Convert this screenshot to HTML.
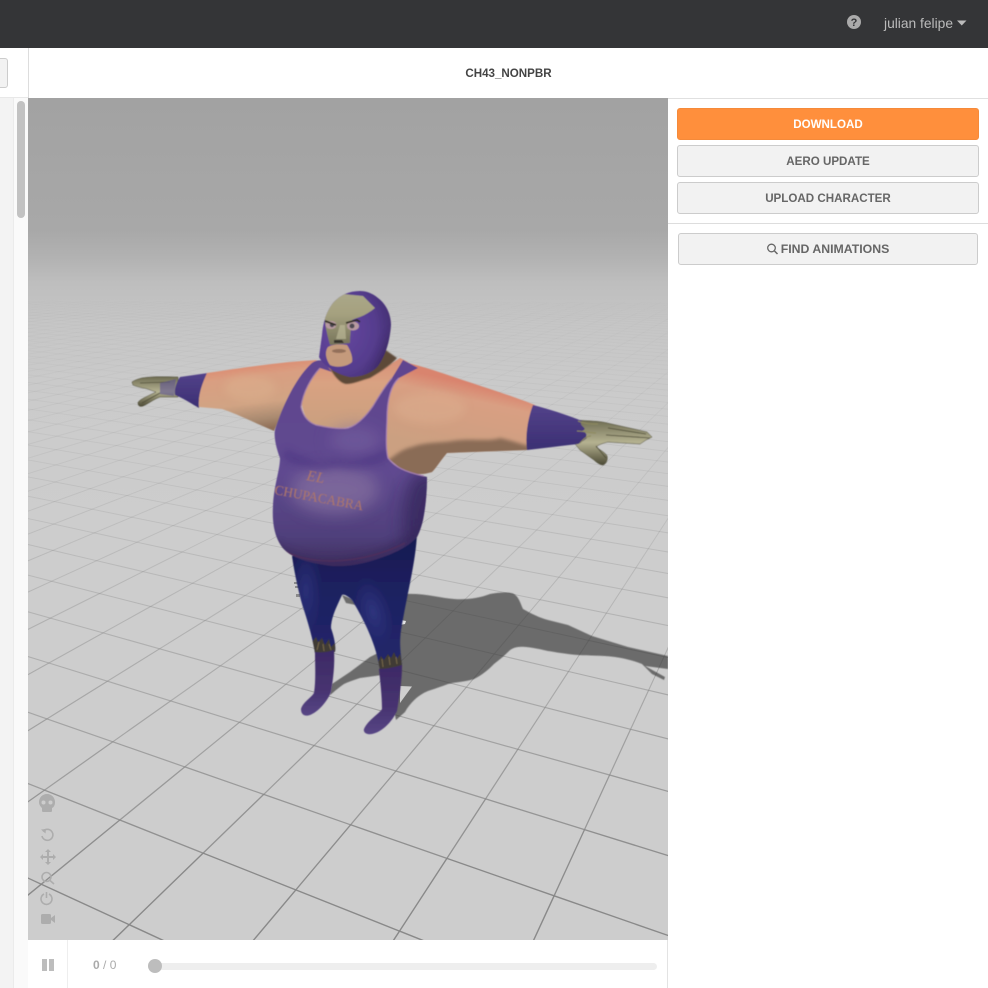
<!DOCTYPE html>
<html><head><meta charset="utf-8"><style>
html,body{margin:0;padding:0;background:#fff;height:988px;overflow:hidden}
#r{position:relative;width:988px;height:988px;overflow:hidden;font-family:"Liberation Sans",sans-serif}
#r div{position:absolute;box-sizing:border-box}
.b{left:677px;width:302px;height:32px;background:#f2f2f2;border:1px solid #ccc;border-radius:3px;color:#666;font-weight:bold;font-size:11.6px;line-height:31px;text-align:center}
svg{position:absolute;left:0;top:0}
</style></head><body><div id="r">
<div style="left:0;top:0;width:988px;height:48px;background:#343537"></div>
<div style="left:884px;top:16px;color:#bbb;font-size:13.8px;line-height:16px;width:74px;white-space:nowrap">julian felipe</div>
<div style="left:0;top:98px;width:14px;height:890px;background:#f3f3f3;border-right:1px solid #ebebeb"></div>
<div style="left:14px;top:98px;width:14px;height:890px;background:#fafafa"></div>
<div style="left:17px;top:101px;width:8px;height:117px;background:#c2c2c2;border-radius:4px"></div>
<div style="left:-6px;top:58px;width:14px;height:30px;background:#f2f2f2;border:1px solid #ccc;border-radius:3px"></div>
<div style="left:28px;top:48px;width:1px;height:50px;background:#ddd"></div>
<div style="left:0;top:97px;width:28px;height:1px;background:#e8e8e8"></div>
<div style="left:668px;top:98px;width:320px;height:1px;background:#e0e0e0"></div>
<div style="left:400px;top:66px;width:217px;text-align:center;color:#444;font-weight:bold;font-size:11.6px;line-height:16px">CH43_NONPBR</div>
<div style="left:28px;top:98px;width:640px;height:842px;background:linear-gradient(#a2a2a2 0,#a8a8a8 132px,#b2b2b2 160px,#bebebe 185px,#c6c6c6 225px,#cbcbcb 300px,#cdcdcd 420px)"></div>
<div class="b" style="top:108px;background:#ff8f3c;border-color:#f58a3a;color:#fff">DOWNLOAD</div>
<div class="b" style="top:145px">AERO UPDATE</div>
<div class="b" style="top:182px">UPLOAD CHARACTER</div>
<div style="left:668px;top:223px;width:320px;height:1px;background:#ddd"></div>
<div class="b" style="top:233px;left:678px;width:300px;padding-left:14px;font-size:12.3px">FIND ANIMATIONS</div>
<div style="left:667px;top:940px;width:1px;height:48px;background:#e3e3e3"></div>
<div style="left:67px;top:940px;width:1px;height:48px;background:#eee"></div>
<div style="left:93px;top:957px;font-size:12px;line-height:16px;color:#aaa"><b>0</b> / 0</div>
<div style="left:155px;top:963px;width:502px;height:7px;background:#eee;border-radius:4px"></div>
<div style="left:148px;top:959px;width:14px;height:14px;background:#bdbdbd;border-radius:50%"></div>
<div style="left:42px;top:959px;width:5px;height:12px;background:#bdbdbd"></div>
<div style="left:49px;top:959px;width:5px;height:12px;background:#bdbdbd"></div>

<svg width="988" height="988" viewBox="0 0 988 988" xmlns="http://www.w3.org/2000/svg">
<defs>
<clipPath id="view"><rect x="28" y="98" width="640" height="842"/></clipPath>
<filter id="bl1" x="-30%" y="-30%" width="160%" height="160%"><feGaussianBlur stdDeviation="1.8"/></filter>
<filter id="bl2" x="-100%" y="-100%" width="300%" height="300%"><feGaussianBlur stdDeviation="4"/></filter>
<filter id="bl3" x="-100%" y="-100%" width="300%" height="300%"><feGaussianBlur stdDeviation="8"/></filter>
<filter id="soft"><feGaussianBlur stdDeviation=".4"/></filter>
<filter id="char" x="-5%" y="-5%" width="110%" height="110%"><feGaussianBlur stdDeviation=".45"/></filter>
<radialGradient id="hl"><stop offset="0" stop-color="#30357f" stop-opacity=".9"/><stop offset="1" stop-color="#30357f" stop-opacity="0"/></radialGradient>
<linearGradient id="armL" gradientUnits="userSpaceOnUse" x1="262" y1="362" x2="270" y2="428"><stop offset="0" stop-color="#dd8a70"/><stop offset=".2" stop-color="#d99f82"/><stop offset=".6" stop-color="#d1a484"/><stop offset=".85" stop-color="#a98a70"/><stop offset="1" stop-color="#8f6f58"/></linearGradient>
<linearGradient id="armR" gradientUnits="userSpaceOnUse" x1="470" y1="384" x2="455" y2="452"><stop offset="0" stop-color="#d9846e"/><stop offset=".22" stop-color="#d99f83"/><stop offset="1" stop-color="#cba081"/></linearGradient>
<linearGradient id="chest" x1="0" y1="0" x2="0" y2="1"><stop offset="0" stop-color="#d98f78"/><stop offset=".35" stop-color="#d9a282"/><stop offset="1" stop-color="#c9a07f"/></linearGradient>
<linearGradient id="vest" x1="0" y1="0" x2="0" y2="1"><stop offset="0" stop-color="#60458f"/><stop offset=".55" stop-color="#604a90"/><stop offset=".85" stop-color="#50407c"/><stop offset="1" stop-color="#40305f"/></linearGradient>
<linearGradient id="leg" x1="0" y1="0" x2="0" y2="1"><stop offset="0" stop-color="#171a50"/><stop offset=".5" stop-color="#1e2263"/><stop offset="1" stop-color="#23276b"/></linearGradient>
<linearGradient id="boot" x1="0" y1="0" x2="0" y2="1"><stop offset="0" stop-color="#3d2a66"/><stop offset=".6" stop-color="#473370"/><stop offset="1" stop-color="#574685"/></linearGradient>
<linearGradient id="band" x1="0" y1="0" x2="0" y2="1"><stop offset="0" stop-color="#53428a"/><stop offset="1" stop-color="#3b2f73"/></linearGradient>
<linearGradient id="gold" x1="0" y1="0" x2="0" y2="1"><stop offset="0" stop-color="#6e6c52"/><stop offset=".5" stop-color="#b5b291"/><stop offset="1" stop-color="#4d4b36"/></linearGradient>
<linearGradient id="face" x1="0" y1="0" x2="0" y2="1"><stop offset="0" stop-color="#aaa788"/><stop offset=".4" stop-color="#a5a17f"/><stop offset="1" stop-color="#77745a"/></linearGradient>
<radialGradient id="mask" cx=".3" cy=".45" r=".8"><stop offset="0" stop-color="#6548a0"/><stop offset=".6" stop-color="#563d8e"/><stop offset="1" stop-color="#3f2c6b"/></radialGradient>
<clipPath id="vestC"><path d="M312 363C316 360 320 360 323 361L332 372 368 372 403 360 418 368 399 378C391 385 387 400 387 420 386 440 386 450 388 458 394 466 404 472 427 477 427 490 426 505 423 520 421 528 419 533 417 537 408 547 395 553 380 558 362 565 340 568 325 565 305 562 290 557 282 547 274 536 272 522 273 505 274 485 280 470 280 458 275 445 274 435 275 430 281 410 295 378 312 363Z"/></clipPath>
<clipPath id="armRC"><path d="M405 362C420 366 433 370 445 374 480 386 510 395 535 405 530 420 527 435 527 450 500 451 470 452 447 453 441 460 436 468 432 472 420 476 408 474 400 468L388 458C385 440 385 415 388 395 392 380 398 372 405 362Z"/></clipPath>
<clipPath id="armLC"><path d="M207 373C240 368 280 362 317 360L300 380 285 405 274 431C255 423 235 413 222 409L199 407C198 395 202 384 207 373Z"/></clipPath>
<clipPath id="headC"><path d="M360 291C349 291 340 295 333 303 326 312 323 323 322 335L319 357C323 365 335 374 350 377 362 377 372 373 378 366 386 355 390 340 391 325 391 314 386 304 378 298 372 293 366 291 360 291Z"/></clipPath>
<clipPath id="legC"><path d="M292 556L417 533C416 560 408 590 401 630 399 645 401 655 402 666L380 670C377 650 369 628 352 600 347 595 343 594 342 595 336 608 331 618 331 628 334 637 336 645 335 652L315 653C313 640 308 622 303 607 298 590 294 570 292 556Z"/></clipPath>
</defs>

<g clip-path="url(#view)">
<g id="grid"></g>
<g fill="#3c3c3c" fill-opacity=".68" filter="url(#soft)">
<path d="M395 596L404 594C425 593 440 598 454 599 466 600 480 598 490 594 500 592 510 592 514 594 519 597 521 605 523 609 530 613 540 618 548 620L568 625 592 636 628 647 668 656 668 669 645 666 665 677 664 680 652 674 642 664C632 660 622 658 615 657 600 655 590 656 578 655 565 654 555 652 548 651 535 648 525 646 518 647 512 648 510 650 508 652 503 657 499 660 494 664 488 670 482 675 474 679 465 682 455 682 448 684 440 687 434 689 428 691 418 695 410 703 405 712L396 720 390 690 385 600Z"/>
<path d="M332 684C338 680 344 676 350 672L370 657 380 652 382 675 360 678C354 680 348 682 344 684 338 688 334 692 330 695Z"/>
<path d="M342 595L352 599 356 605 346 603Z"/>
</g>
<path d="M400 686L412 686.500 400 703Z" fill="#cfcfcf"/>
<path d="M401 620L406 621 405 624 400 625Z" fill="#e4e4e4"/>
<g fill="#8a8a8a"><rect x="294" y="582" width="5" height="2"/><rect x="295" y="586" width="4" height="2"/><rect x="296" y="594" width="4" height="3"/></g>

<g filter="url(#char)">
<!-- legs -->
<path d="M292 556L417 533C416 560 408 590 401 630 399 645 401 655 402 666L380 670C377 650 369 628 352 600 347 595 343 594 342 595 336 608 331 618 331 628 334 637 336 645 335 652L315 653C313 640 308 622 303 607 298 590 294 570 292 556Z" fill="url(#leg)"/>
<g clip-path="url(#legC)">
<ellipse cx="373" cy="612" rx="18" ry="36" fill="url(#hl)" transform="rotate(-15 373 612)"/>
<ellipse cx="306" cy="590" rx="16" ry="44" fill="url(#hl)" opacity=".8"/>
<path d="M312 642L316 637 318 642 322 638 325 645 329 639 331 647 335 643 336 654 314 654Z" fill="#3f3a34"/>
<path d="M378 662L381 656 384 660 388 654 391 658 394 652 397 659 400 654 403 668 380 672Z" fill="#3f3a34"/>
<path d="M317 650L319 642M324 651L323 644M331 650L329 644M383 667L382 659M390 665L389 657M397 664L396 657" stroke="#77694a" stroke-width="1" fill="none"/>
</g>
<!-- boots -->
<path d="M315 652C322 653 328 652 334 650 335 665 333 680 331 692 327 702 318 712 310 715 304 717 301 714 301 709 303 702 311 698 314 693 316 680 315 665 315 652Z" fill="url(#boot)"/>
<path d="M379 669C387 669 395 667 402 665 402 682 399 698 397 711 392 722 382 732 372 734 366 735 363 732 364 729 368 720 379 714 382 709 382 695 380 680 379 669Z" fill="url(#boot)"/>
<!-- right arm -->
<path d="M405 362C420 366 433 370 445 374 480 386 510 395 535 405 530 420 527 435 527 450 500 451 470 452 447 453 441 460 436 468 432 472 420 476 408 474 400 468L388 458C385 440 385 415 388 395 392 380 398 372 405 362Z" fill="url(#armR)"/>
<g clip-path="url(#armRC)">
<path d="M386 462C395 455 402 449 412 447 425 442 440 443 452 441 470 438 490 442 500 438 510 440 520 444 530 446L530 460 430 482 385 475Z" fill="#8a6c57" filter="url(#bl1)"/>
<ellipse cx="430" cy="408" rx="36" ry="16" fill="#dcad8e" opacity=".5" filter="url(#bl2)"/>
</g>
<!-- right hand -->
<path d="M575 420C588 421 600 421 607 423L647 432 652 437 646 440 640 444 608 442C603 443 598 445 596 447 600 450 606 453 607 456 608 460 606 464 603 465 600 465 596 462 594 460L580 450 572 440Z" fill="url(#gold)" stroke="#45432f" stroke-width=".5"/>
<path d="M608 428L646 434M606 435L650 438M596 446L606 458" stroke="#4a4834" stroke-width=".8" fill="none"/>
<path d="M533 405C552 410 570 416 582 421 577 426 590 428 582 431 590 434 584 437 587 438 583 441 580 443 578 444 560 446 545 448 527 450 525 435 528 418 533 405Z" fill="url(#band)"/>
<path d="M578 421C585 424 590 424 598 424M577 431C583 431 590 433 596 433M580 443C583 440 586 436 591 436" stroke="#8f8a5e" stroke-width="1" fill="none"/>
<!-- left hand -->
<path d="M132 382C135 380 138 379 142 378 155 376 168 377 178 377L178 397 160 397C154 399 148 404 143 406 140 407 138 406 138 403 138 400 148 396 156 392 150 390 146 388 143 388 139 387 135 386 133 385Z" fill="url(#gold)" stroke="#45432f" stroke-width=".5"/>
<path d="M140 383L170 382M142 403L160 393" stroke="#4d4b36" stroke-width=".8" fill="none"/>
<path d="M160 383L176 379 174 396 160 394Z" fill="#5c5190" opacity=".6"/>
<path d="M208 373L180 377C176 383 174 390 175 395 183 398 192 404 199 408 198 395 202 384 208 373Z" fill="url(#band)"/>
<!-- left arm -->
<path d="M207 373C240 368 280 362 317 360L300 380 285 405 274 431C255 423 235 413 222 409L199 407C198 395 202 384 207 373Z" fill="url(#armL)"/>
<g clip-path="url(#armLC)"><ellipse cx="250" cy="388" rx="26" ry="13" fill="#dcb08e" opacity=".5" filter="url(#bl2)"/></g>
<!-- chest skin -->
<path d="M320 366C326 362 335 372 350 376 372 378 385 368 400 358L408 362 397 376C387 385 378 398 372 409 362 422 352 428 340 428 325 427 313 425 308 420 302 412 300 400 303 388Z" fill="url(#chest)"/>
<path d="M330 368C334 376 340 383 346 384 354 384 362 380 370 378 380 372 390 366 397 358L380 346 335 355Z" fill="#5d4a38" filter="url(#soft)"/>
<!-- vest -->
<path d="M312 363C316 360 320 360 323 361L332 372 320 368C311 378 303 392 301 407 303 416 308 422 316 425 330 428 342 429 348 428 358 425 366 416 373 406 379 396 385 386 392 378L403 360 418 368 399 378C391 385 387 400 387 420 386 440 386 450 388 458 394 466 404 472 427 477 427 490 426 505 423 520 421 528 419 533 417 537 408 547 395 553 380 558 362 565 340 568 325 565 305 562 290 557 282 547 274 536 272 522 273 505 274 485 280 470 280 458 275 445 274 435 275 430 281 410 295 378 312 363Z" fill="url(#vest)"/>
<g clip-path="url(#vestC)">
<ellipse cx="335" cy="490" rx="44" ry="24" fill="#84709f" opacity=".75" filter="url(#bl3)"/>
<ellipse cx="355" cy="440" rx="26" ry="14" fill="#7b66a3" opacity=".5" filter="url(#bl3)"/>
<path d="M284 453C300 463 320 468 336 462 355 466 375 462 388 452" stroke="#4a3280" stroke-width="9" fill="none" opacity=".55" filter="url(#bl2)"/>
<ellipse cx="425" cy="520" rx="22" ry="50" fill="#36265c" opacity=".8" filter="url(#bl3)"/>
<path d="M270 535C300 570 370 565 420 525L420 575 270 575Z" fill="#35265a" opacity=".5" filter="url(#bl2)"/>
<path d="M280 548C305 566 360 566 405 543" stroke="#4e2f5c" stroke-width="1.5" fill="none"/>
</g>
<path d="M320 368C311 378 303 392 301 407 303 416 308 422 316 425 330 428 342 429 348 428 358 425 366 416 373 406 379 396 385 386 392 378" fill="none" stroke="#a37fa8" stroke-width="1.2"/>
<path d="M399 378C391 385 387 400 387 420 386 440 386 450 388 458 394 466 404 472 424 476" fill="none" stroke="#a57fb0" stroke-width="1.2"/>
<text font-family="'Liberation Serif',serif" font-style="italic" font-size="15" fill="#ab7668" transform="translate(306 480) rotate(10)" textLength="18">EL</text>
<text font-family="'Liberation Serif',serif" font-size="13.5" fill="#ab7668" transform="translate(274 494) rotate(10.5)" textLength="90" lengthAdjust="spacingAndGlyphs">CHUPACABRA</text>

<!-- head -->
<path d="M360 291C349 291 340 295 333 303 326 312 323 323 322 335L319 357C323 365 335 374 350 377 362 377 372 373 378 366 386 355 390 340 391 325 391 314 386 304 378 298 372 293 366 291 360 291Z" fill="url(#mask)"/>
<g clip-path="url(#headC)">
<path d="M370 375L392 330 394 372Z" fill="#35245a" opacity=".5" filter="url(#bl2)"/>
<path d="M343 294L363 296 375 308C370 312 365 315 360 317 357 318 354 319 352 320 351 328 350 336 350 343L330 345C328 338 326 330 325 322 324 316 325 312 327 308 331 302 337 297 343 294Z" fill="url(#face)"/>
<path d="M328 347C333 344 340 344 347 345 351 351 353 358 352 362 347 367 336 368 330 365 325 358 325 351 328 347Z" fill="#c49a7c"/>
<ellipse cx="339" cy="351" rx="7" ry="2" fill="#93705a"/>
<ellipse cx="331" cy="325" rx="5.500" ry="4" fill="#b79aa0"/>
<ellipse cx="353" cy="326" rx="6" ry="4.500" fill="#b79aa0"/>
<circle cx="332" cy="325" r="2.200" fill="#4d4a52"/><circle cx="352" cy="326" r="2.500" fill="#4d4a52"/>
<path d="M325 321L336 325M346 323L357 320 360 322" stroke="#2f2c24" stroke-width="1.800" fill="none"/>
<path d="M334 340L342 340 344 343 334 343Z" fill="#35322a"/>
<path d="M340 325L345 325 346 339 336 339Z" fill="#c3bf9f" opacity=".6"/>
</g>
</g>
</g>

<!-- view icons -->
<g fill="#adadad">
<path d="M47 794C42 794 39 798 39 802 39 805 41 807 42 808L42 811C42 812 43 812 44 812L50 812C51 812 52 812 52 811L52 808C54 807 55 805 55 802 55 798 52 794 47 794ZM43.500 800.500a2 2 0 1 1 0 4 2 2 0 1 1 0-4ZM50.500 800.500a2 2 0 1 1 0 4 2 2 0 1 1 0-4Z" fill-rule="evenodd"/>
<path d="M48 849l-3 3h2v4h-4v-2l-3 3 3 3v-2h4v4h-2l3 3 3-3h-2v-4h4v2l3-3-3-3v2h-4v-4h2Z"/>
<rect x="41" y="914" width="10" height="10" rx="1.500"/><path d="M51 918l4-3v8l-4-3Z"/>
</g>
<g fill="none" stroke="#adadad" stroke-width="1.600">
<path d="M43 831.500a5.500 5.500 0 1 1-1 4.500"/>
<circle cx="46.500" cy="877" r="4.500"/><path d="M50 880.500l4 3.500"/>
<path d="M44 894a5.500 5.500 0 1 0 5 0M46.500 892v6"/>
</g>
<path d="M41 829.500l5-.5-.5 4.500Z" fill="#adadad"/>

<!-- header icons -->
<circle cx="854" cy="22" r="7" fill="#aaa"/>
<text x="854" y="26" text-anchor="middle" font-family="'Liberation Sans',sans-serif" font-weight="bold" font-size="11" fill="#343537">?</text>
<path d="M957 20.500h9.500l-4.750 5Z" fill="#bbb"/>
<!-- find icon -->
<circle cx="771.500" cy="248" r="3.800" fill="none" stroke="#666" stroke-width="1.300"/><path d="M774.500 251l3 3" stroke="#666" stroke-width="1.500"/>
</svg>
<script>
(function(){
var g=document.getElementById('grid'),h='';
function P(u,v){var w=1-.0506*u+.0946*v;return [(119.8+73.03*u+82.43*v)/w,(820-10.07*u+19.47*v)/w,w];}
function seg(a,b){
 if(a[2]<.3||b[2]<.3)return;
 if((a[0]<20&&b[0]<20)||(a[0]>680&&b[0]>680)||(a[1]>945&&b[1]>945)||(a[1]<215&&b[1]<215))return;
 if(Math.abs(a[0])>1500||Math.abs(b[0])>1500||a[1]>1400||b[1]>1400)return;
 var w=(a[2]+b[2])/2;
 var o=Math.min(.95,.8/Math.pow(w,2));
 var sw=Math.max(.9,1.3/Math.sqrt(w));
 if(o<=.02)return;
 h+='<line x1="'+a[0].toFixed(1)+'" y1="'+a[1].toFixed(1)+'" x2="'+b[0].toFixed(1)+'" y2="'+b[1].toFixed(1)+'" stroke="#858585" stroke-opacity="'+o.toFixed(2)+'" stroke-width="'+sw.toFixed(2)+'"/>';
}
for(var u=-90;u<=18;u++)for(var v=-8;v<100;v++)seg(P(u,v),P(u,v+1));
for(var v=-8;v<=100;v++)for(var u=-90;u<18;u++)seg(P(u,v),P(u+1,v));
g.innerHTML=h;
})();
</script>
</div></body></html>
